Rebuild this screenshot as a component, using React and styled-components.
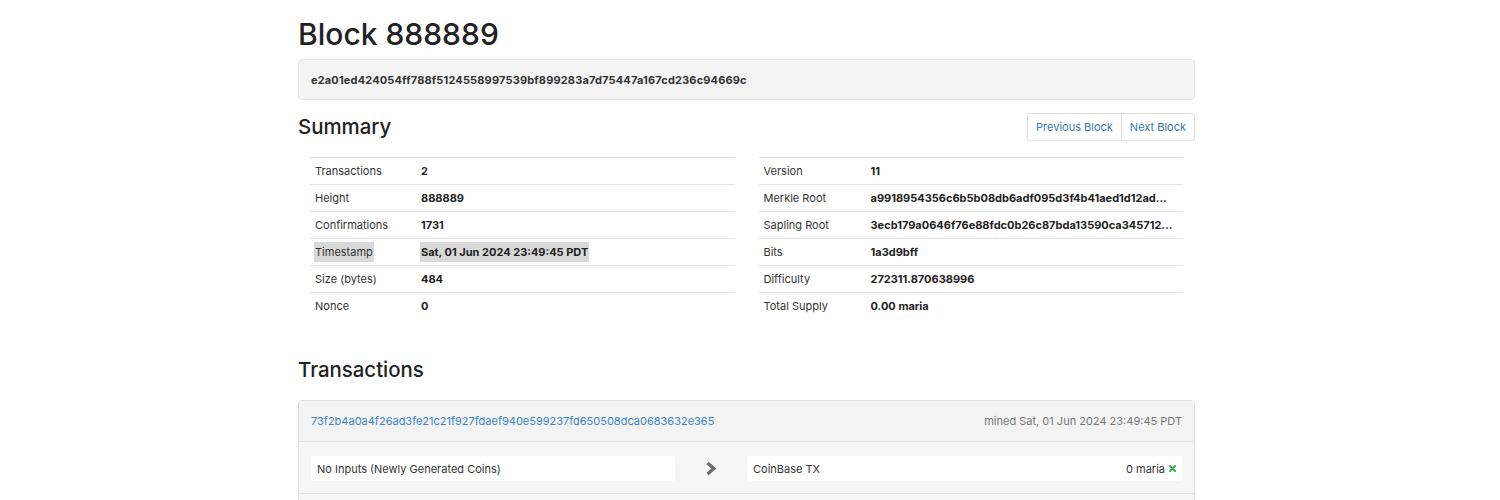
import React from "react";
import styled, { createGlobalStyle } from "styled-components";

const Global = createGlobalStyle`
  html, body { margin: 0; padding: 0; background: #fff; }
  body {
    font-family: Inter, "Noto Sans", "Liberation Sans", sans-serif;
    color: #333;
    font-size: 11px;
  }
  * { box-sizing: border-box; }
`;

const Page = styled.div`
  width: 897px;
  margin-left: 298px;
  padding-bottom: 40px;
`;

const Title = styled.h1`
  margin: 18px 0 0;
  font-size: 30px;
  line-height: 33px;
  font-weight: 500;
  color: #222;
`;

const Well = styled.div`
  margin-top: 8px;
  height: 41px;
  padding: 0 12px;
  display: flex;
  align-items: center;
  background: #f4f4f4;
  border: 1px solid #e3e3e3;
  border-radius: 4px;
  font-weight: 700;
  font-size: 11px;
  letter-spacing: 0.16px;
  color: #333;
`;

const SectionHead = styled.div`
  display: flex;
  justify-content: space-between;
  align-items: center;
  margin-top: ${(p) => p.$top}px;
`;

const H2 = styled.h2`
  margin: 0;
  font-size: 20.4px;
  line-height: 24px;
  font-weight: 500;
  color: #222;
`;

const BtnGroup = styled.div`
  display: flex;
  height: 28px;
  border: 1px solid #dedede;
  border-radius: 3px;
  background: #fff;
`;

const Btn = styled.a`
  display: flex;
  align-items: center;
  padding: 0 ${(p) => p.$pad}px;
  color: #337ab7;
  font-size: 11px;
  text-decoration: none;
  cursor: pointer;
  & + & { border-left: 1px solid #dedede; }
`;

const Columns = styled.div`
  display: grid;
  grid-template-columns: minmax(0, 1fr) minmax(0, 1fr);
  margin-top: 16px;
`;

const Col = styled.div`
  padding: 0 12px;
  min-width: 0;
`;

const Row = styled.div`
  display: flex;
  align-items: center;
  height: 27px;
  border-top: 1px solid #e2e2e2;
`;

const Label = styled.div`
  width: ${(p) => p.$w}px;
  padding-left: 5px;
  flex: none;
  color: #333;
`;

const Value = styled.div`
  flex: 1;
  min-width: 0;
  font-weight: 700;
  color: #222;
  white-space: nowrap;
`;

const Sel = styled.span`
  background: ${(p) => (p.$on ? "#d9d9d9" : "transparent")};
  padding: 3px 1px;
  margin-left: -1px;
`;

const Panel = styled.div`
  margin-top: 18px;
  border: 1px solid #e0e0e0;
  border-radius: 4px;
  background: #f5f5f5;
  overflow: hidden;
`;

const PanelHead = styled.div`
  height: 41px;
  display: flex;
  align-items: center;
  justify-content: space-between;
  padding: 0 12px;
  border-bottom: 1px solid #e4e4e4;
  background: #f3f3f3;
`;

const TxLink = styled.a`
  color: #3a85c6;
  text-decoration: none;
  font-size: 11px;
`;

const Mined = styled.span`
  color: #777;
  font-size: 11px;
`;

const PanelBody = styled.div`
  display: grid;
  grid-template-columns: 364px 72px 1fr;
  padding: 14px 12px 12px;
  background: #f6f6f6;
`;

const IOBox = styled.div`
  height: 25px;
  display: flex;
  align-items: center;
  justify-content: space-between;
  padding: 0 6px;
  background: #fff;
  border-radius: 3px;
  color: #333;
`;

const ArrowCell = styled.div`
  display: flex;
  align-items: center;
  justify-content: center;
`;

const Amount = styled.span`
  display: flex;
  align-items: center;
  gap: 4px;
`;

const PanelFoot = styled.div`
  height: 40px;
  border-top: 1px solid #e4e4e4;
  background: #f6f6f6;
`;

const left = [
  ["Transactions", "2"],
  ["Height", "888889"],
  ["Confirmations", "1731"],
  ["Timestamp", "Sat, 01 Jun 2024 23:49:45 PDT", true],
  ["Size (bytes)", "484"],
  ["Nonce", "0"],
];

const right = [
  ["Version", "11"],
  ["Merkle Root", "a9918954356c6b5b08db6adf095d3f4b41aed1d12ad..."],
  ["Sapling Root", "3ecb179a0646f76e88fdc0b26c87bda13590ca345712..."],
  ["Bits", "1a3d9bff"],
  ["Difficulty", "272311.870638996"],
  ["Total Supply", "0.00 maria"],
];

function Table({ rows, w }) {
  return rows.map(([k, v, sel]) => (
    <Row key={k}>
      <Label $w={w}>
        <Sel $on={sel}>{k}</Sel>
      </Label>
      <Value>
        <Sel $on={sel}>{v}</Sel>
      </Value>
    </Row>
  ));
}

export default function App() {
  return (
    <>
      <Global />
      <Page>
        <Title>Block 888889</Title>
        <Well>e2a01ed424054ff788f5124558997539bf899283a7d75447a167cd236c94669c</Well>
        <SectionHead $top={13}>
          <H2>Summary</H2>
          <BtnGroup>
            <Btn $pad={8}>Previous Block</Btn>
            <Btn $pad={8}>Next Block</Btn>
          </BtnGroup>
        </SectionHead>
        <Columns>
          <Col>
            <Table rows={left} w={111} />
          </Col>
          <Col>
            <Table rows={right} w={112} />
          </Col>
        </Columns>
        <SectionHead $top={39}>
          <H2>Transactions</H2>
        </SectionHead>
        <Panel>
          <PanelHead>
            <TxLink>73f2b4a0a4f26ad3fe21c21f927fdaef940e599237fd650508dca0683632e365</TxLink>
            <Mined>mined Sat, 01 Jun 2024 23:49:45 PDT</Mined>
          </PanelHead>
          <PanelBody>
            <IOBox>No Inputs (Newly Generated Coins)</IOBox>
            <ArrowCell>
              <svg width="12" height="15" viewBox="0 0 12 15">
                <polyline points="2.5,2 9,7.5 2.5,13" fill="none" stroke="#6b6b6b" strokeWidth="3.2" strokeLinecap="butt" strokeLinejoin="miter" />
              </svg>
            </ArrowCell>
            <IOBox>
              <span>CoinBase TX</span>
              <Amount>
                0 maria
                <svg width="7" height="7" viewBox="0 0 7 7">
                  <path d="M1 1 L6 6 M6 1 L1 6" stroke="#3aa655" strokeWidth="2" strokeLinecap="round" />
                </svg>
              </Amount>
            </IOBox>
          </PanelBody>
          <PanelFoot />
        </Panel>
      </Page>
    </>
  );
}
